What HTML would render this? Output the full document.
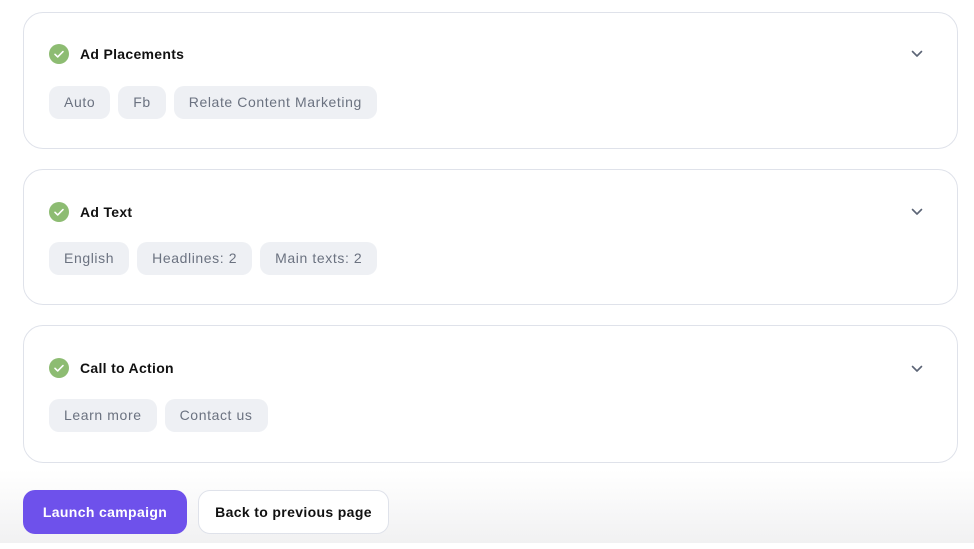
<!DOCTYPE html>
<html><head><meta charset="utf-8"><style>
*{margin:0;padding:0;box-sizing:border-box}
html,body{width:974px;height:549px;overflow:hidden;background:#fff;font-family:"Liberation Sans",sans-serif}
.bg{position:absolute;left:0;top:470px;width:974px;height:73px;background:linear-gradient(#fff,#f1f1f2)}
.card{position:absolute;left:23px;width:935px;border:1.5px solid #dfe2ea;border-radius:20px;background:#fff}
.chk{position:absolute;left:25px;top:31px;width:20px;height:20px;border-radius:50%;background:#8dbc72}
.chk svg{position:absolute;left:0;top:0}
.title{position:absolute;left:56px;top:33px;font-size:14px;font-weight:bold;color:#111;letter-spacing:0.3px}
.chev{position:absolute;left:887px;top:37px}
.chips{position:absolute;left:25px;top:73px;display:flex;gap:8px}
.chip{height:33px;line-height:33px;padding:0 15px;border-radius:10px;background:#eef0f4;color:#6b7280;font-size:14px;letter-spacing:0.6px}
.btn{position:absolute;top:490px;height:44px;line-height:42px;border-radius:12px;font-size:14px;font-weight:bold;text-align:center;letter-spacing:0.35px}
</style></head><body>
<div class="bg"></div>

<div class="card" style="top:12px;height:137px">
<div class="chk"><svg width="20" height="20"><path d="M6 10.3l2.7 2.6L14 7.6" stroke="#fff" stroke-width="1.6" fill="none" stroke-linecap="round" stroke-linejoin="round"/></svg></div>
<div class="title">Ad Placements</div>
<svg class="chev" width="12" height="8"><path d="M1.5 1.5L6 6l4.5-4.5" stroke="#5b6475" stroke-width="1.6" fill="none" stroke-linecap="round" stroke-linejoin="round"/></svg>
<div class="chips"><div class="chip">Auto</div><div class="chip">Fb</div><div class="chip">Relate Content Marketing</div></div>
</div>

<div class="card" style="top:169px;height:136px">
<div class="chk" style="top:32px"><svg width="20" height="20"><path d="M6 10.3l2.7 2.6L14 7.6" stroke="#fff" stroke-width="1.6" fill="none" stroke-linecap="round" stroke-linejoin="round"/></svg></div>
<div class="title" style="top:34px">Ad Text</div>
<svg class="chev" style="top:38px" width="12" height="8"><path d="M1.5 1.5L6 6l4.5-4.5" stroke="#5b6475" stroke-width="1.6" fill="none" stroke-linecap="round" stroke-linejoin="round"/></svg>
<div class="chips" style="top:72px"><div class="chip">English</div><div class="chip">Headlines: 2</div><div class="chip">Main texts: 2</div></div>
</div>

<div class="card" style="top:325px;height:138px">
<div class="chk" style="top:32px"><svg width="20" height="20"><path d="M6 10.3l2.7 2.6L14 7.6" stroke="#fff" stroke-width="1.6" fill="none" stroke-linecap="round" stroke-linejoin="round"/></svg></div>
<div class="title" style="top:34px">Call to Action</div>
<svg class="chev" style="top:39px" width="12" height="8"><path d="M1.5 1.5L6 6l4.5-4.5" stroke="#5b6475" stroke-width="1.6" fill="none" stroke-linecap="round" stroke-linejoin="round"/></svg>
<div class="chips" style="top:73px"><div class="chip">Learn more</div><div class="chip">Contact us</div></div>
</div>

<div class="btn" style="left:23px;width:164px;background:#6e51eb;color:#fff;line-height:44px">Launch campaign</div>
<div class="btn" style="left:198px;width:191px;background:#fff;border:1.5px solid #dfe2ea;color:#111">Back to previous page</div>
</body></html>
